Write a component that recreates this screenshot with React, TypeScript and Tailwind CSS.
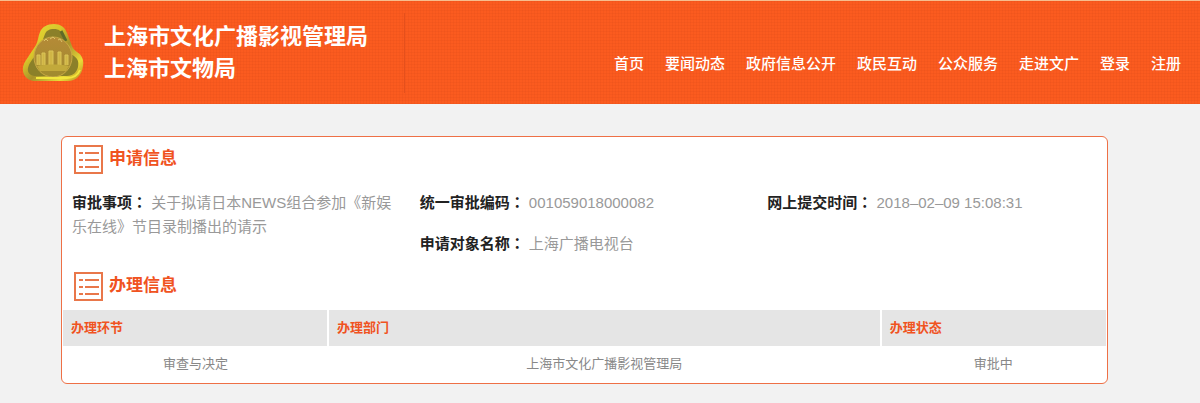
import type { ReactNode } from "react";

const navItems = ["首页", "要闻动态", "政府信息公开", "政民互动", "公众服务", "走进文广", "登录", "注册"];

const steps = [
    { step: "审查与决定", department: "上海市文化广播影视管理局", status: "审批中" },
];

function Logo() {
    return (
        <svg viewBox="0 0 62 60" className="w-[62px] h-[60px] shrink-0" aria-hidden="true">
            <defs>
                <linearGradient id="rim" x1="0" y1="0" x2="1" y2="1">
                    <stop offset="0" stopColor="#e9e23a" />
                    <stop offset="0.35" stopColor="#d8c52a" />
                    <stop offset="0.55" stopColor="#a8922a" />
                    <stop offset="0.8" stopColor="#eadb38" />
                    <stop offset="1" stopColor="#b5861f" />
                </linearGradient>
                <linearGradient id="disc" x1="0" y1="0" x2="0" y2="1">
                    <stop offset="0" stopColor="#b58a37" />
                    <stop offset="1" stopColor="#a08b2e" />
                </linearGradient>
            </defs>
            <path
                d="M32 1C38 1 43 4 45 10L50 23C51 26 53 27 55 29C60 32 62 37 61 43C60 52 54 58 46 58H12C4 57 0 51 1 44C2 39 5 36 8 31L14 22C16 18 16 14 18 9C20 4 25 1 32 1Z"
                fill="url(#rim)"
            />
            <path
                d="M32 6C37 6 39 8 40 12L45 26C46 30 49 31 52 33C56 36 57 39 56 44C55 49 51 53 45 53H13C8 53 5 49 6 45C7 40 10 37 13 33L18 25C20 20 21 16 23 11C24 8 27 6 32 6Z"
                fill="#8b8029"
            />
            <path d="M39 8L44 18" stroke="#5f6a28" strokeWidth="3" />
            <ellipse cx="31" cy="34" rx="19" ry="20" fill="url(#disc)" stroke="#c9aa45" strokeWidth="1" />
            <path d="M22 18L24 16L26 18M28 16L31 14L33 16M36 17L38 16L40 19" fill="none" stroke="#ddc46a" strokeWidth="1" />
            <path
                d="M15 42V32H18V42M20 42V30H23V42M27 42V28H31V42M36 42V29H39V42M43 42V32H46V42"
                fill="#d0b545"
                stroke="#dac458"
                strokeWidth="1"
            />
            <path d="M15 43C23 41 39 41 47 43L44 48H18Z" fill="#c2a93b" />
            <path d="M14 55H45C51 55 56 52 58 47" fill="none" stroke="#f2e63c" strokeWidth="2" />
        </svg>
    );
}

function ListIcon() {
    return (
        <svg viewBox="0 0 29 29" className="size-[29px] shrink-0" fill="none" stroke="#e9774a" strokeWidth="2" aria-hidden="true">
            <rect x="1" y="1" width="27" height="27" />
            <path d="M5 8H9M11 8H25M5 15H9M11 15H25M5 22H9M11 22H25" strokeWidth="2" />
        </svg>
    );
}

function SectionTitle({ children }: { children: ReactNode }) {
    return (
        <div className="flex items-start gap-1.5 px-[11px]">
            <ListIcon />
            <h2 className="text-[17px] leading-7 font-bold text-[#f0531f]">{children}</h2>
        </div>
    );
}

function Field({ label, children }: { label: string; children: ReactNode }) {
    return (
        <p className="text-[#999]">
            <span className="font-bold text-[#222]">{label}</span>
            <span className="font-['Noto_Sans_CJK_TC',sans-serif] font-bold text-[#222]">：</span>{" "}
            {children}
        </p>
    );
}

export default function App() {
    return (
        <div className="min-h-screen bg-[#f2f2f2] font-['Liberation_Sans','Noto_Sans_CJK_SC',sans-serif]">
            <header className="flex items-center justify-between h-[104px] border-t border-[#f7bd8d] bg-[#fb5b1f] bg-[repeating-linear-gradient(90deg,#d0441522_0_1px,transparent_1px_3px),repeating-linear-gradient(0deg,#d0441522_0_1px,transparent_1px_3px)] pl-[22px] pr-[19px] text-white">
                <div className="flex items-center gap-5">
                    <Logo />
                    <h1 className="pr-9 py-2 border-r border-[#e5501c] text-[22px] leading-8 font-bold whitespace-nowrap">
                        上海市文化广播影视管理局
                        <br />
                        上海市文物局
                    </h1>
                </div>
                <nav className="flex gap-[21px] pt-[22px] text-[15px] leading-6 font-medium whitespace-nowrap">
                    {navItems.map(item => (
                        <a key={item} href="#">{item}</a>
                    ))}
                </nav>
            </header>

            <main className="mt-8 ml-[61px] mr-[92px] pt-2 px-px pb-px rounded-md border border-[#ee7046] bg-white">
                <SectionTitle>申请信息</SectionTitle>
                <div className="grid grid-cols-3 mt-4 text-[15px] leading-6">
                    <div className="px-[9px]">
                        <Field label="审批事项">关于拟请日本NEWS组合参加《新娱乐在线》节目录制播出的请示</Field>
                    </div>
                    <div className="flex flex-col gap-4 px-[9px]">
                        <Field label="统一审批编码">001059018000082</Field>
                        <Field label="申请对象名称">上海广播电视台</Field>
                    </div>
                    <div className="px-[9px]">
                        <Field label="网上提交时间">2018–02–09 15:08:31</Field>
                    </div>
                </div>

                <div className="mt-4">
                    <SectionTitle>办理信息</SectionTitle>
                </div>
                <table className="w-full mt-[9px] table-fixed border-collapse text-[13px] leading-5">
                    <colgroup>
                        <col className="w-[25.4%]" />
                        <col className="w-[53%]" />
                        <col />
                    </colgroup>
                    <thead>
                        <tr className="bg-[#e5e5e5] text-left text-[#f0531f]">
                            <th className="px-2 py-2 border-r-2 border-white">办理环节</th>
                            <th className="px-2 py-2 border-r-2 border-white">办理部门</th>
                            <th className="px-2 py-2">办理状态</th>
                        </tr>
                    </thead>
                    <tbody>
                        {steps.map(row => (
                            <tr key={row.step} className="text-center text-[#888]">
                                <td className="px-2 py-2">{row.step}</td>
                                <td className="px-2 py-2">{row.department}</td>
                                <td className="px-2 py-2">{row.status}</td>
                            </tr>
                        ))}
                    </tbody>
                </table>
            </main>
        </div>
    );
}
